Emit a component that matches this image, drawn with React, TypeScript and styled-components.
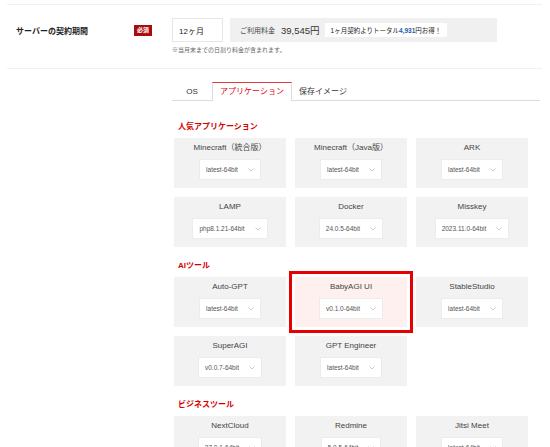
import React from "react";
import styled, { createGlobalStyle } from "styled-components";

const GlobalStyle = createGlobalStyle`
  html, body { margin: 0; padding: 0; background: #fff; }
  body {
    font-family: "Liberation Sans", "Noto Sans CJK JP", sans-serif;
    color: #333;
  }
  * { box-sizing: border-box; }
`;

const Page = styled.div`
  width: 550px;
  padding: 4px 8px 0 7px;
`;

const ContractRow = styled.section`
  display: flex;
  align-items: flex-start;
  border-top: 1px solid #f0f0f0;
  border-bottom: 1px solid #f0f0f0;
  height: 65px;
  padding-top: 13px;
`;

const LabelCol = styled.div`
  width: 165px;
  display: flex;
  align-items: center;
  justify-content: space-between;
  padding: 0 20px 0 9px;
  height: 24px;
`;

const Label = styled.div`
  font-size: 8px;
  font-weight: bold;
  color: #222;
`;

const Badge = styled.span`
  background: #a80d0d;
  color: #fff;
  font-size: 6px;
  font-weight: bold;
  padding: 2px 3px;
  line-height: 7px;
`;

const FieldCol = styled.div`
  display: flex;
  flex-direction: column;
  gap: 3px;
`;

const FieldLine = styled.div`
  display: flex;
  gap: 7px;
`;

const Select = styled.div<{ $big?: boolean }>`
  display: inline-flex;
  align-items: center;
  justify-content: space-between;
  background: #fff;
  border: 1px solid ${(p) => (p.$big ? "#e6e6e6" : "#ececec")};
  height: ${(p) => (p.$big ? 24 : 21)}px;
  padding: ${(p) => (p.$big ? "0 8px 0 6px" : "0 6px 0 6px")};
  gap: 10px;
  font-size: ${(p) => (p.$big ? 8 : 6.5)}px;
  color: ${(p) => (p.$big ? "#222" : "#555")};
  width: ${(p) => (p.$big ? "51px" : "auto")};
  white-space: nowrap;
`;

const Price = styled.div`
  width: 267px;
  height: 24px;
  background: #f0f0f0;
  display: flex;
  align-items: center;
  padding-left: 10px;
`;

const PriceLabel = styled.span`
  font-size: 7px;
  color: #444;
`;

const PriceValue = styled.span`
  font-size: 9.5px;
  color: #333;
  margin-left: 6px;
`;

const Deal = styled.span`
  background: #fff;
  font-size: 6.5px;
  color: #222;
  height: 14px;
  display: inline-flex;
  align-items: center;
  padding: 0 6px;
  margin-left: 5px;
  width: 122px;
  white-space: nowrap;
`;

const DealNum = styled.b`
  color: #1a5aa8;
  font-size: 6.5px;
`;

const Note = styled.div`
  font-size: 6px;
  color: #666;
`;

const Main = styled.div`
  margin-left: 165px;
  padding-top: 13px;
`;

const TabBar = styled.div`
  display: flex;
  border-bottom: 1px solid #dcdcdc;
  width: 368px;
  height: 19px;
`;

const Tab = styled.div<{ $active?: boolean; $w: number }>`
  width: ${(p) => p.$w}px;
  text-align: center;
  font-size: 8px;
  line-height: 17px;
  color: ${(p) => (p.$active ? "#e50012" : "#333")};
  background: #fff;
  border: 1px solid ${(p) => (p.$active ? "#dcdcdc" : "transparent")};
  border-top-color: ${(p) => (p.$active ? "#e8383d" : "transparent")};
  border-bottom: none;
  height: ${(p) => (p.$active ? 19 : 18)}px;
  margin-bottom: ${(p) => (p.$active ? -1 : 0)}px;
`;

const Sections = styled.div`
  padding-left: 2px;
  padding-top: 21px;
  display: flex;
  flex-direction: column;
  gap: 14px;
`;

const Section = styled.div`
  display: flex;
  flex-direction: column;
  gap: 6px;
`;

const Heading = styled.h3`
  margin: 0 0 0 4px;
  font-size: 8px;
  line-height: 10px;
  font-weight: bold;
  color: #d40000;
`;

const Grid = styled.div`
  display: grid;
  grid-template-columns: repeat(3, 112px);
  gap: 9px;
`;

const Card = styled.div<{ $hl?: boolean }>`
  height: 50px;
  background: ${(p) => (p.$hl ? "#fdf0ef" : "#f2f2f2")};
  display: flex;
  flex-direction: column;
  align-items: center;
  padding-top: 5px;
  gap: 6px;
  outline: ${(p) => (p.$hl ? "3px solid #e60000" : "none")};
  outline-offset: 3px;
`;

const CardTitle = styled.div`
  font-size: 8px;
  line-height: 10px;
  font-weight: 400;
  color: #444;
  white-space: nowrap;
`;

const Chevron = () => (
  <svg width="6" height="4" viewBox="0 0 6 4" fill="none">
    <path d="M0.5 0.5 L3 3 L5.5 0.5" stroke="#bdbdbd" strokeWidth="0.8" />
  </svg>
);

type App = { name: string; ver: string; hl?: boolean };

const sections: { title: string; apps: App[] }[] = [
  {
    title: "人気アプリケーション",
    apps: [
      { name: "Minecraft（統合版）", ver: "latest-64bit" },
      { name: "Minecraft（Java版）", ver: "latest-64bit" },
      { name: "ARK", ver: "latest-64bit" },
      { name: "LAMP", ver: "php8.1.21-64bit" },
      { name: "Docker", ver: "24.0.5-64bit" },
      { name: "Misskey", ver: "2023.11.0-64bit" },
    ],
  },
  {
    title: "AIツール",
    apps: [
      { name: "Auto-GPT", ver: "latest-64bit" },
      { name: "BabyAGI UI", ver: "v0.1.0-64bit", hl: true },
      { name: "StableStudio", ver: "latest-64bit" },
      { name: "SuperAGI", ver: "v0.0.7-64bit" },
      { name: "GPT Engineer", ver: "latest-64bit" },
    ],
  },
  {
    title: "ビジネスツール",
    apps: [
      { name: "NextCloud", ver: "27.0.1-64bit" },
      { name: "Redmine", ver: "5.0.5-64bit" },
      { name: "Jitsi Meet", ver: "latest-64bit" },
    ],
  },
];

export default function AppRoot() {
  return (
    <>
      <GlobalStyle />
      <Page>
        <ContractRow>
          <LabelCol>
            <Label>サーバーの契約期間</Label>
            <Badge>必須</Badge>
          </LabelCol>
          <FieldCol>
            <FieldLine>
              <Select $big>
                <span>12ヶ月</span>
                <Chevron />
              </Select>
              <Price>
                <PriceLabel>ご利用料金</PriceLabel>
                <PriceValue>39,545円</PriceValue>
                <Deal>
                  1ヶ月契約よりトータル<DealNum>4,931</DealNum>円お得！
                </Deal>
              </Price>
            </FieldLine>
            <Note>※当月末までの日割り料金が含まれます。</Note>
          </FieldCol>
        </ContractRow>
        <Main>
          <TabBar>
            <Tab $w={40}>OS</Tab>
            <Tab $w={80} $active>
              アプリケーション
            </Tab>
            <Tab $w={62}>保存イメージ</Tab>
          </TabBar>
          <Sections>
            {sections.map((s) => (
              <Section key={s.title}>
                <Heading>{s.title}</Heading>
                <Grid>
                  {s.apps.map((a) => (
                    <Card key={a.name} $hl={a.hl}>
                      <CardTitle>{a.name}</CardTitle>
                      <Select>
                        <span>{a.ver}</span>
                        <Chevron />
                      </Select>
                    </Card>
                  ))}
                </Grid>
              </Section>
            ))}
          </Sections>
        </Main>
      </Page>
    </>
  );
}
